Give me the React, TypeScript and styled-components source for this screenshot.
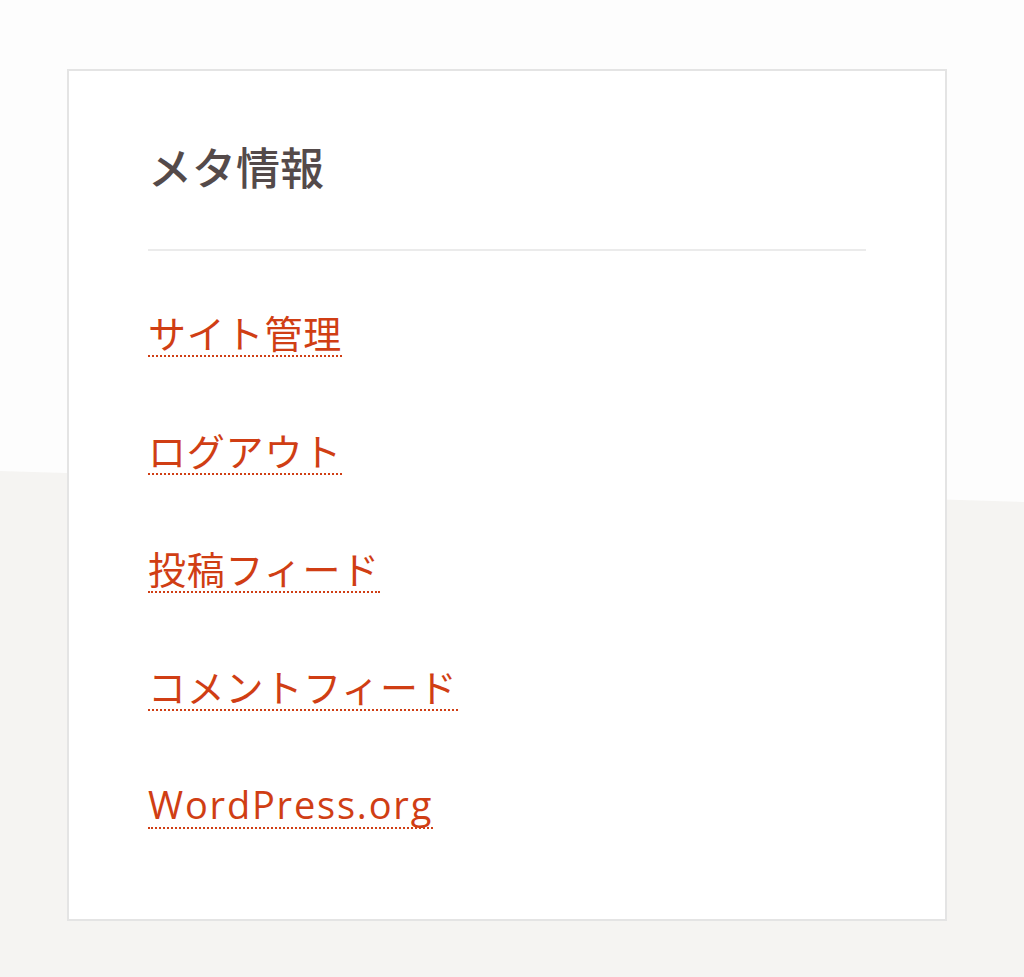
import React from "react";
import styled, { createGlobalStyle } from "styled-components";

const GlobalStyle = createGlobalStyle`
  html, body {
    margin: 0;
    padding: 0;
    background: #fdfdfd;
  }
  body {
    font-family: "Noto Sans CJK JP", "Noto Sans", sans-serif;
  }
`;

const links = [
  "サイト管理",
  "ログアウト",
  "投稿フィード",
  "コメントフィード",
  "WordPress.org",
];

export default function App() {
  return (
    <>
      <GlobalStyle />
      <Page>
        <Widget>
          <Title>メタ情報</Title>
          <Divider />
          <LinkList>
            {links.map((label) => (
              <li key={label}>
                <MetaLink href="#" $latin={/^[A-Za-z]/.test(label)}>
                  {label}
                </MetaLink>
              </li>
            ))}
          </LinkList>
        </Widget>
      </Page>
    </>
  );
}

const Page = styled.div`
  position: relative;
  min-height: 977px;
  box-sizing: border-box;
  padding: 69px 0 0 67px;
  overflow: hidden;

  /* slanted grey band behind the widget */
  &::before {
    content: "";
    position: absolute;
    inset: 0;
    background: #f5f4f2;
    clip-path: polygon(0 471px, 100% 502px, 100% 100%, 0 100%);
    z-index: 0;
  }
`;

const Widget = styled.section`
  position: relative;
  z-index: 1;
  width: 880px;
  box-sizing: border-box;
  background: #ffffff;
  border: 2px solid #e4e4e4;
  padding: 73px 79px 90px;
`;

const Title = styled.h2`
  margin: 0;
  font-size: 44px;
  line-height: 44px;
  font-weight: 500;
  color: #544a4a;
`;

const Divider = styled.hr`
  margin: 61px 0 62px;
  border: none;
  height: 2px;
  background: #ebebeb;
`;

const LinkList = styled.ul`
  list-style: none;
  margin: 0;
  padding: 0;
  display: flex;
  flex-direction: column;
  gap: 74px;
`;

const MetaLink = styled.a<{ $latin?: boolean }>`
  display: inline-block;
  font-size: 38px;
  line-height: 38px;
  padding-bottom: 4px;
  color: #d03e14;
  text-decoration: none;
  border-bottom: 2px dotted #d03e14;
  font-weight: 400;
  font-family: ${(p) =>
    p.$latin ? `"Open Sans", "Noto Sans", sans-serif` : `"Noto Sans CJK JP", sans-serif`};
  letter-spacing: ${(p) => (p.$latin ? "1.8px" : "0.8px")};
`;
